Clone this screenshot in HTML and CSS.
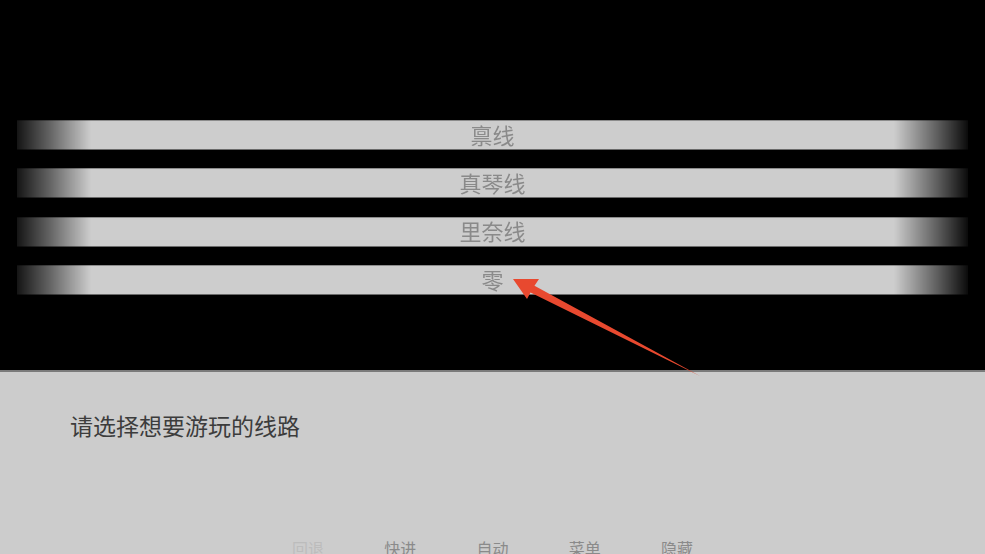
FILE: index.html
```html
<!DOCTYPE html>
<html lang="zh-CN">
<head>
<meta charset="utf-8">
<title>线路选择</title>
<link rel="stylesheet" href="styles.css">
</head>
<body>
<div class="screen">
  <section class="stage">
    <div class="choices">
      <div class="choice"><span>禀线</span></div>
      <div class="choice"><span>真琴线</span></div>
      <div class="choice"><span>里奈线</span></div>
      <div class="choice"><span>零</span></div>
    </div>
  </section>
  <section class="dialog">
    <p class="message">请选择想要游玩的线路</p>
    <nav class="controls">
      <span class="ctl disabled">回退</span>
      <span class="ctl">快进</span>
      <span class="ctl">自动</span>
      <span class="ctl">菜单</span>
      <span class="ctl">隐藏</span>
    </nav>
  </section>
  <svg class="arrow" width="985" height="554" viewBox="0 0 985 554" xmlns="http://www.w3.org/2000/svg">
    <polygon points="513,279 539,279 534.5,285.8 700,376 530.5,292.5 527,299" fill="#e8492f"/>
  </svg>
</div>
</body>
</html>
```

FILE: styles.css
```css
html, body {
  margin: 0;
  padding: 0;
  width: 985px;
  height: 554px;
  overflow: hidden;
  background: #000;
}

.screen {
  position: relative;
  width: 985px;
  height: 554px;
  display: flex;
  flex-direction: column;
  font-family: "Noto Sans CJK SC", "Noto Sans", sans-serif;
}

.stage {
  height: 370px;
  background: #000;
  box-sizing: border-box;
  padding: 120px 17px 0 17px;
}

.choices {
  display: flex;
  flex-direction: column;
  gap: 18.4px;
}

.choice {
  height: 30px;
  box-sizing: border-box;
  padding-bottom: 3px;
  background: #cdcdcd;
  box-shadow: inset 0 1px 0 #8c8c8c, inset 0 -1px 0 #6a6a6a;
  -webkit-mask-image: linear-gradient(to right,
    rgba(0,0,0,0.1) 0px,
    rgba(0,0,0,0.45) 30px,
    #000 74px,
    #000 calc(100% - 74px),
    rgba(0,0,0,0.45) calc(100% - 30px),
    rgba(0,0,0,0.05) 100%);
  mask-image: linear-gradient(to right,
    rgba(0,0,0,0.1) 0px,
    rgba(0,0,0,0.45) 30px,
    #000 74px,
    #000 calc(100% - 74px),
    rgba(0,0,0,0.45) calc(100% - 30px),
    rgba(0,0,0,0.05) 100%);
  display: flex;
  align-items: center;
  justify-content: center;
}

.choice span {
  font-size: 22px;
  line-height: 22px;
  color: #8a8a8a;
}

.dialog {
  flex: 1;
  background: #cccccc;
  border-top: 2px solid #7a7a7a;
  display: flex;
  flex-direction: column;
  justify-content: space-between;
}

.message {
  margin: 42px 0 0 70px;
  font-size: 23px;
  line-height: 23px;
  color: #3c3c3c;
}

.controls {
  display: flex;
  justify-content: center;
  height: 16px;
  transform: translateY(2px);
}

.ctl {
  width: 92.3px;
  text-align: center;
  font-size: 16px;
  line-height: 16px;
  color: #8a8a8a;
  white-space: nowrap;
}

.ctl.disabled {
  color: #bcbcbc;
}

.arrow {
  position: absolute;
  left: 0;
  top: 0;
  pointer-events: none;
}
```
